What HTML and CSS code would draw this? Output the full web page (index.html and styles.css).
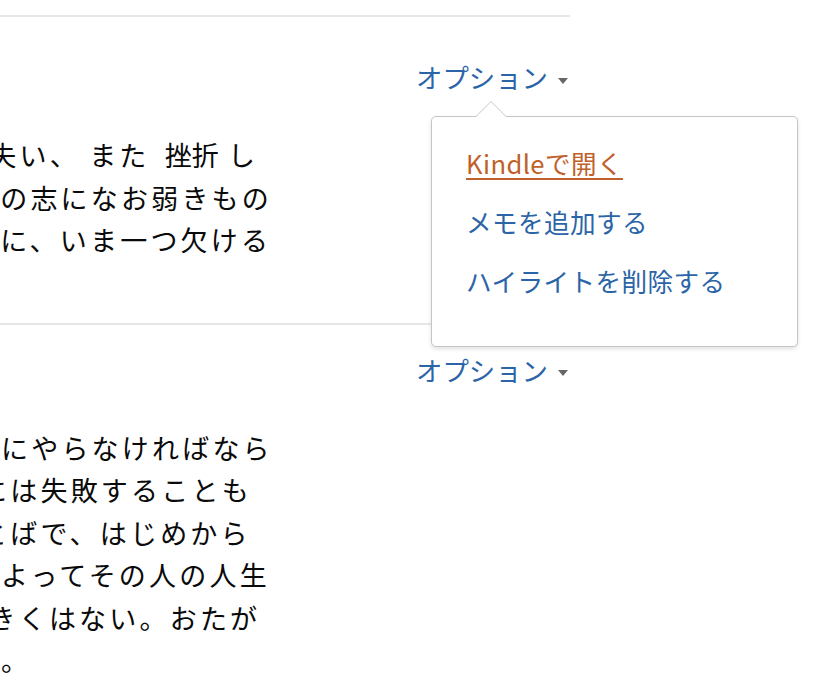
FILE: index.html
```html
<!DOCTYPE html>
<html lang="ja">
<head>
    <meta charset="UTF-8">
    <meta name="viewport" content="width=device-width, initial-scale=1.0">
    <title>ハイライトとメモ</title>
    <link rel="stylesheet" href="styles.css">
</head>
<body>
    <div class="notes">
        <div class="notes-top"></div>

        <div class="note">
            <div class="note-head">
                <div class="options">オプション<span class="caret"></span>
                    <div class="popover">
                        <ul>
                            <li><a href="#" class="open">Kindleで開く</a></li>
                            <li><a href="#">メモを追加する</a></li>
                            <li><a href="#">ハイライトを削除する</a></li>
                        </ul>
                    </div>
                </div>
            </div>
            <p class="note-text">
                人は だれしも 道を見失い、 また <span class="word">挫折</span> し<br>
                立ち上がろうとする者の志になお弱きもの<br>
                があるとすれば、それに、いま一つ欠ける
            </p>
        </div>

        <div class="note">
            <div class="note-head">
                <div class="options">オプション<span class="caret"></span></div>
            </div>
            <p class="note-text">
                仕事は自分の手で誠実にやらなければなら<br>
                ない。しかし、 ときには失敗することも<br>
                大切なのは 自分のことばで、はじめから<br>
                日々のささいな選択によってその人の人生<br>
                その差は、 決して 大きくはない。おたが<br>
                いに支え合いたいもの。
            </p>
        </div>
    </div>
</body>
</html>
```

FILE: styles.css
```css
html,
body {
    height: 100%;
}

body {
    margin: 0;
    background: #fff;
    color: #0a0a0a;
    font-family: "Noto Sans CJK JP", "Noto Sans", sans-serif;
    overflow: hidden;
}

/* the list is scrolled sideways, so its left part is off screen */
.notes {
    width: 871px;
    margin-left: -301px;
    padding-top: 15px;
}

.notes-top {
    border-top: 2px solid #e6e6e6;
    margin-bottom: 15px;
}

.note {
    padding: 33px 0 61px;
}

.note + .note {
    border-top: 2px solid #e6e6e6;
}

.note-head {
    text-align: right;
    padding-right: 2px;
    font-size: 26.4px;
    line-height: 24px;
}

.options {
    position: relative;
    display: inline-block;
    color: #2b64a7;
}

.caret {
    display: inline-block;
    width: 0;
    height: 0;
    margin-left: 10px;
    border-left: 5.5px solid transparent;
    border-right: 5.5px solid transparent;
    border-top: 6px solid #666;
    vertical-align: middle;
}

.note-text {
    margin: 45px 0 0;
    font-size: 27px;
    line-height: 42.5px;
    letter-spacing: 3.2px;
    white-space: nowrap;
}

.note-text .word {
    margin-left: 6px;
    letter-spacing: 0;
}

.popover {
    position: absolute;
    top: 51px;
    left: 15px;
    width: 297px;
    padding: 34px 34px 53px;
    background: #fff;
    border: 1px solid #c6c6c6;
    border-radius: 5px;
    box-shadow: 0 2px 4px rgba(0, 0, 0, 0.12);
    font-size: 25.6px;
    letter-spacing: 0.4px;
    text-align: left;
    z-index: 2;
}

.popover::before,
.popover::after {
    content: "";
    position: absolute;
    border-style: solid;
    border-color: transparent;
}

.popover::before {
    top: -16px;
    left: 43px;
    border-width: 0 16px 16px;
    border-bottom-color: #c6c6c6;
}

.popover::after {
    top: -15px;
    left: 44px;
    border-width: 0 15px 15px;
    border-bottom-color: #fff;
}

.popover ul {
    list-style: none;
    margin: 0;
    padding: 0;
}

.popover li + li {
    margin-top: 35px;
}

.popover a {
    color: #2b64a7;
    text-decoration: none;
}

.popover a.open {
    color: #c0602a;
    text-decoration: underline;
    text-underline-offset: 4px;
}
```
